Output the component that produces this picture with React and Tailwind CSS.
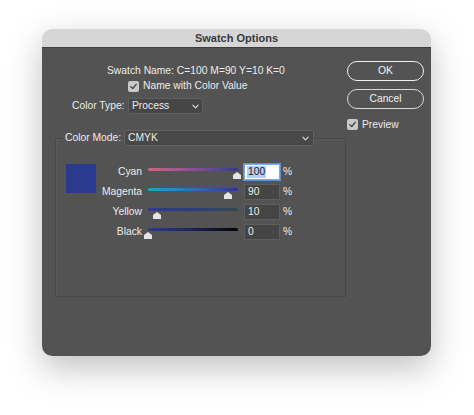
import React from "react";

const rows = [
  { label: "Cyan", value: "100", pos: 89, grad: "bg-gradient-to-r from-[#d4607f] via-[#8a4f95] to-[#2e3a92]", focus: true },
  { label: "Magenta", value: "90", pos: 80, grad: "bg-gradient-to-r from-[#1aa6c9] via-[#2a72b0] to-[#2e3592]" },
  { label: "Yellow", value: "10", pos: 9, grad: "bg-gradient-to-r from-[#2b3a92] via-[#2c3d78] to-[#3a4650]" },
  { label: "Black", value: "0", pos: 0, grad: "bg-gradient-to-r from-[#2e3a92] via-[#1c2258] to-[#050505]" },
];

function Check() {
  return (
    <span className="w-[11px] h-[11px] rounded-[2px] bg-[#c9c9c9] flex items-center justify-center">
      <svg width="9" height="9" viewBox="0 0 10 10" fill="none">
        <path d="M2 5.2 L4.2 7.3 L8 2.6" stroke="#4a4a4a" strokeWidth="1.6" strokeLinecap="round" strokeLinejoin="round" />
      </svg>
    </span>
  );
}

function Chevron() {
  return (
    <svg width="7" height="5" viewBox="0 0 8 5" fill="none">
      <path d="M1 1 L4 4 L7 1" stroke="#dcdcdc" strokeWidth="1.3" strokeLinecap="round" strokeLinejoin="round" />
    </svg>
  );
}

function Thumb() {
  return (
    <svg width="8" height="7" viewBox="0 0 8 7">
      <polygon points="4,0 8,3 8,7 0,7 0,3" fill="#e6e6e6" />
    </svg>
  );
}

export default function App() {
  return (
    <div
      className="w-[474px] h-[415px] bg-white pt-[29px] pl-[42px] text-[10.3px] text-[#ececec] whitespace-nowrap"
      style={{ fontFamily: '"Liberation Sans", Arial, sans-serif' }}
    >
      <div className="w-[389px] h-[327px] rounded-[10px] overflow-hidden flex flex-col shadow-[0_12px_34px_rgba(0,0,0,0.25)]">
        {/* title bar */}
        <div className="h-[19px] bg-[#d6d6d6] border-b border-[#3e3e3e] flex items-center justify-center font-bold text-[11px] text-[#3a3a3a]">
          Swatch Options
        </div>

        <div className="flex-1 bg-[#535353] flex">
          {/* left column */}
          <div className="w-[305px] flex flex-col">
            <div className="mt-[16px] h-[14px] pl-[65px] leading-[14px]">Swatch Name: C=100 M=90 Y=10 K=0</div>
            <div className="mt-[1px] h-[14px] pl-[86px] flex items-center gap-[4px]">
              <Check />
              <span>Name with Color Value</span>
            </div>
            <div className="mt-[5px] h-[16px] pl-[30px] flex items-center gap-[5px]">
              <span className="w-[51px] text-right">Color Type:</span>
              <div className="w-[75px] h-[16px] bg-[#464646] border border-[#5f5f5f] rounded-[2px] flex items-center justify-between px-[3px]">
                <span>Process</span>
                <Chevron />
              </div>
            </div>

            {/* group box */}
            <div className="mt-[24px] ml-[13px] w-[291px] h-[159px] border border-[#474747] shadow-[inset_1px_1px_0_#5c5c5c]">
              <div className="-mt-[9px] ml-[8px] flex items-center gap-[2px]">
                <span className="bg-[#535353] pl-[1px] pr-[1px]">Color Mode:</span>
                <div className="w-[190px] h-[16px] bg-[#484848] border border-[#626262] rounded-[2px] flex items-center justify-between pl-[3px] pr-[4px]">
                  <span>CMYK</span>
                  <Chevron />
                </div>
              </div>

              <div className="mt-[10px] flex">
                <div className="ml-[10px] mt-[8px] w-[30px] h-[29px] bg-[#2a3a8e]" />
                <div className="mt-[6px] flex flex-col">
                  {rows.map((r) => (
                    <div key={r.label} className="h-[20px] flex items-center">
                      <span className="w-[46px] text-right">{r.label}</span>
                      <div className="ml-[6px] w-[90px] h-[16px] relative">
                        <div className={`absolute left-0 right-0 top-[4px] h-[3px] rounded-full ${r.grad}`} />
                        <div className="absolute top-[8px]" style={{ left: r.pos - 4 }}>
                          <Thumb />
                        </div>
                      </div>
                      {r.focus ? (
                        <div className="ml-[6px] w-[36px] h-[16px] bg-white border border-[#7aa7e6] shadow-[0_0_0_1px_#5b8fd6] flex items-center pl-[2px]">
                          <span className="bg-[#b4cdf2] text-[#222] leading-[12px] px-[1px]">100</span>
                        </div>
                      ) : (
                        <div className="ml-[6px] w-[36px] h-[16px] bg-[#454545] border border-[#5e5e5e] flex items-center pl-[3px]">
                          {r.value}
                        </div>
                      )}
                      <span className="ml-[3px]">%</span>
                    </div>
                  ))}
                </div>
              </div>
            </div>
          </div>

          {/* right column */}
          <div className="flex flex-col pt-[13px]">
            <button className="w-[77px] h-[20px] rounded-full border-[1.5px] border-[#f0f0f0] text-[#f2f2f2]">OK</button>
            <button className="mt-[8px] w-[77px] h-[20px] rounded-full border border-[#d8d8d8] text-[#f2f2f2]">Cancel</button>
            <div className="mt-[8px] flex items-center gap-[4px]">
              <Check />
              <span>Preview</span>
            </div>
          </div>
        </div>
      </div>
    </div>
  );
}
